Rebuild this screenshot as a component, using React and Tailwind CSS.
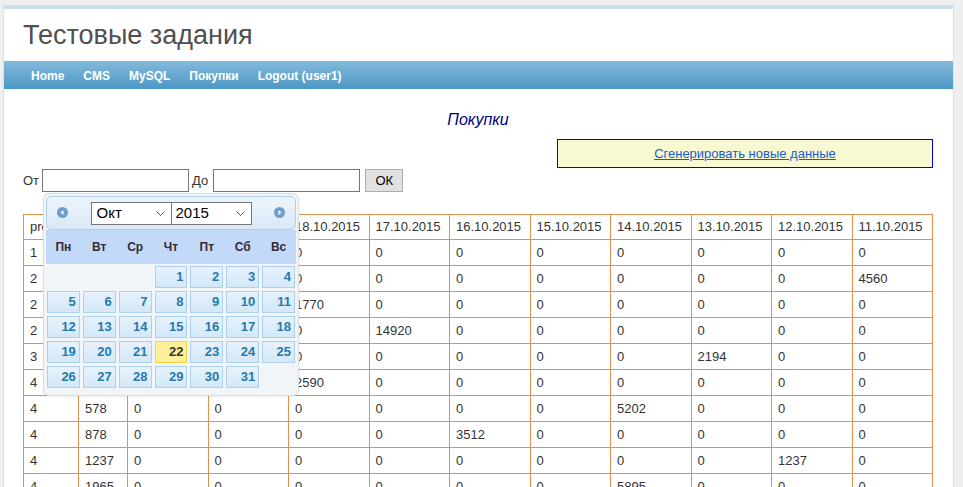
import React from "react";

const navLinks = ["Home", "CMS", "MySQL", "Покупки", "Logout (user1)"];

const headers = [
  "prod",
  "price",
  "20.10.2015",
  "19.10.2015",
  "18.10.2015",
  "17.10.2015",
  "16.10.2015",
  "15.10.2015",
  "14.10.2015",
  "13.10.2015",
  "12.10.2015",
  "11.10.2015",
];

const rows = [
  ["1", "120", "0", "0", "0", "0", "0", "0", "0", "0", "0", "0"],
  ["2", "456", "0", "0", "0", "0", "0", "0", "0", "0", "0", "4560"],
  ["2", "885", "0", "0", "1770", "0", "0", "0", "0", "0", "0", "0"],
  ["2", "1492", "0", "0", "0", "14920", "0", "0", "0", "0", "0", "0"],
  ["3", "1097", "0", "0", "0", "0", "0", "0", "0", "2194", "0", "0"],
  ["4", "1295", "0", "0", "2590", "0", "0", "0", "0", "0", "0", "0"],
  ["4", "578", "0", "0", "0", "0", "0", "0", "5202", "0", "0", "0"],
  ["4", "878", "0", "0", "0", "0", "3512", "0", "0", "0", "0", "0"],
  ["4", "1237", "0", "0", "0", "0", "0", "0", "0", "0", "1237", "0"],
  ["4", "1965", "0", "0", "0", "0", "0", "0", "5895", "0", "0", "0"],
];

const dayNames = ["Пн", "Вт", "Ср", "Чт", "Пт", "Сб", "Вс"];

// октябрь 2015 начинается с четверга
const days = [null, null, null, ...Array.from({ length: 31 }, (_, i) => i + 1), null];

const Chevron = () => (
  <svg width="9" height="5" viewBox="0 0 9 5" className="shrink-0">
    <path d="M0.5 0.5 L4.5 4.5 L8.5 0.5" fill="none" stroke="#555" strokeWidth="1" />
  </svg>
);

const CircleArrow = ({ dir }) => (
  <svg width="11" height="11" viewBox="0 0 11 11">
    <circle cx="5.5" cy="5.5" r="5.5" fill="#6d9fcd" />
    {dir === "prev" ? (
      <path d="M3.5 5.5 L6.5 3 L6.5 8 Z" fill="#fff" />
    ) : (
      <path d="M7.5 5.5 L4.5 3 L4.5 8 Z" fill="#fff" />
    )}
  </svg>
);

const Calendar = () => {
  return (
    <div className="absolute left-[39px] top-[104px] w-[256px] h-[203px] bg-[#f2f5f7] border border-[#dddddd] rounded-[6px] p-[2px] shadow-[0_1px_2px_rgba(0,0,0,0.08)]">
      {/* шапка */}
      <div className="relative h-[34px] rounded-[5px] border border-[#aed0ea] bg-gradient-to-b from-[#edf5fc] to-[#d9e8f6] flex items-center justify-center">
        <div className="absolute left-[10px] top-[10px]">
          <CircleArrow dir="prev" />
        </div>
        <div className="flex">
          <div className="w-[81px] h-[23px] bg-white border border-[#767676] flex items-center justify-between pl-[5px] pr-[6px] text-[15px] text-black">
            <span>Окт</span>
            <Chevron />
          </div>
          <div className="w-[80px] h-[23px] bg-white border border-[#767676] border-l-0 flex items-center justify-between pl-[4px] pr-[6px] text-[15px] text-black">
            <span>2015</span>
            <Chevron />
          </div>
        </div>
        <div className="absolute right-[10px] top-[10px]">
          <CircleArrow dir="next" />
        </div>
      </div>

      {/* дни недели */}
      <div className="h-[34px] bg-[#c3d9fa] grid grid-cols-7 gap-x-[3px] items-center px-[1px]">
        {dayNames.map((d) => (
          <div key={d} className="text-center text-[12px] font-bold text-[#362b36]">
            {d}
          </div>
        ))}
      </div>

      {/* числа */}
      <div className="mt-[2px] grid grid-cols-7 gap-x-[3px] gap-y-[3px] px-[1px]">
        {days.map((d, i) =>
          d === null ? (
            <div key={i} className="h-[22px]" />
          ) : (
            <div
              key={i}
              className={
                d === 22
                  ? "h-[22px] border border-[#f5d63c] bg-[#fff09a] text-[#363636] text-right pr-[3px] text-[13px] font-bold leading-[20px]"
                  : "h-[22px] border border-[#aed0ea] bg-gradient-to-b from-[#e7f2fc] via-[#dcedfa] to-[#d3e8f8] text-[#2779aa] text-right pr-[3px] text-[13px] font-bold leading-[20px]"
              }
            >
              {d}
            </div>
          )
        )}
      </div>
    </div>
  );
};

const App = () => {
  return (
    <div
      className="h-[487px] overflow-hidden bg-[#efefef] pl-[3px] pt-[5px]"
      style={{ fontFamily: '"Liberation Sans", Arial, sans-serif' }}
    >
      <div className="w-[951px] h-[500px] bg-white border-t-4 border-t-[#c9e1ef] border-x border-x-[#d3e5ef]">
        {/* заголовок */}
        <div className="h-[52px] pl-[19px] pt-[11px] text-[27px] leading-[31px] text-[#505050]">
          Тестовые задания
        </div>

        {/* меню */}
        <div className="h-[28px] bg-gradient-to-b from-[#83badb] to-[#4a98c6] flex items-center pl-[27px] pt-[1px] gap-[19px]">
          {navLinks.map((l) => (
            <span key={l} className="text-white text-[12px] font-bold">
              {l}
            </span>
          ))}
        </div>

        <div className="relative pl-[19px] pr-[20px] pt-[22px]">
          <div className="text-center italic text-[16px] leading-[18px] text-[#000080]">
            Покупки
          </div>

          <div className="mt-[10px] flex justify-end">
            <div className="w-[376px] h-[29px] border border-[#0000ee] bg-[#f8f8d3] flex items-center justify-center">
              <a className="text-[13px] text-[#1a5ccc] underline">Сгенерировать новые данные</a>
            </div>
          </div>

          {/* фильтр */}
          <div className="mt-[1px] flex items-center h-[23px] text-[13px] text-[#333]">
            <span>От</span>
            <div className="ml-[3px] w-[147px] h-[23px] border border-[#767676] bg-white" />
            <span className="ml-[3px]">До</span>
            <div className="ml-[5px] w-[147px] h-[23px] border border-[#767676] bg-white" />
            <div className="ml-[5px] w-[38px] h-[23px] bg-[#e1e1e1] border border-[#adadad] flex items-center justify-center text-black">
              ОК
            </div>
          </div>

          {/* таблица */}
          <table className="mt-[22px] w-[910px] table-fixed border-collapse text-[13px] text-[#333]">
            <colgroup>
              <col className="w-[55px]" />
              <col className="w-[49px]" />
              {headers.slice(2).map((h) => (
                <col key={h} />
              ))}
            </colgroup>
            <thead>
              <tr className="h-[25px]">
                {headers.map((h) => (
                  <th key={h} className="border border-[#e0904f] text-left font-normal px-[6px] whitespace-nowrap overflow-hidden">
                    {h}
                  </th>
                ))}
              </tr>
            </thead>
            <tbody>
              {rows.map((r, i) => (
                <tr key={i} className="h-[26px]">
                  {r.map((c, j) => (
                    <td key={j} className="border border-[#e0904f] px-[6px] whitespace-nowrap">
                      {c}
                    </td>
                  ))}
                </tr>
              ))}
            </tbody>
          </table>

          <Calendar />
        </div>
      </div>
    </div>
  );
};

export default App;
